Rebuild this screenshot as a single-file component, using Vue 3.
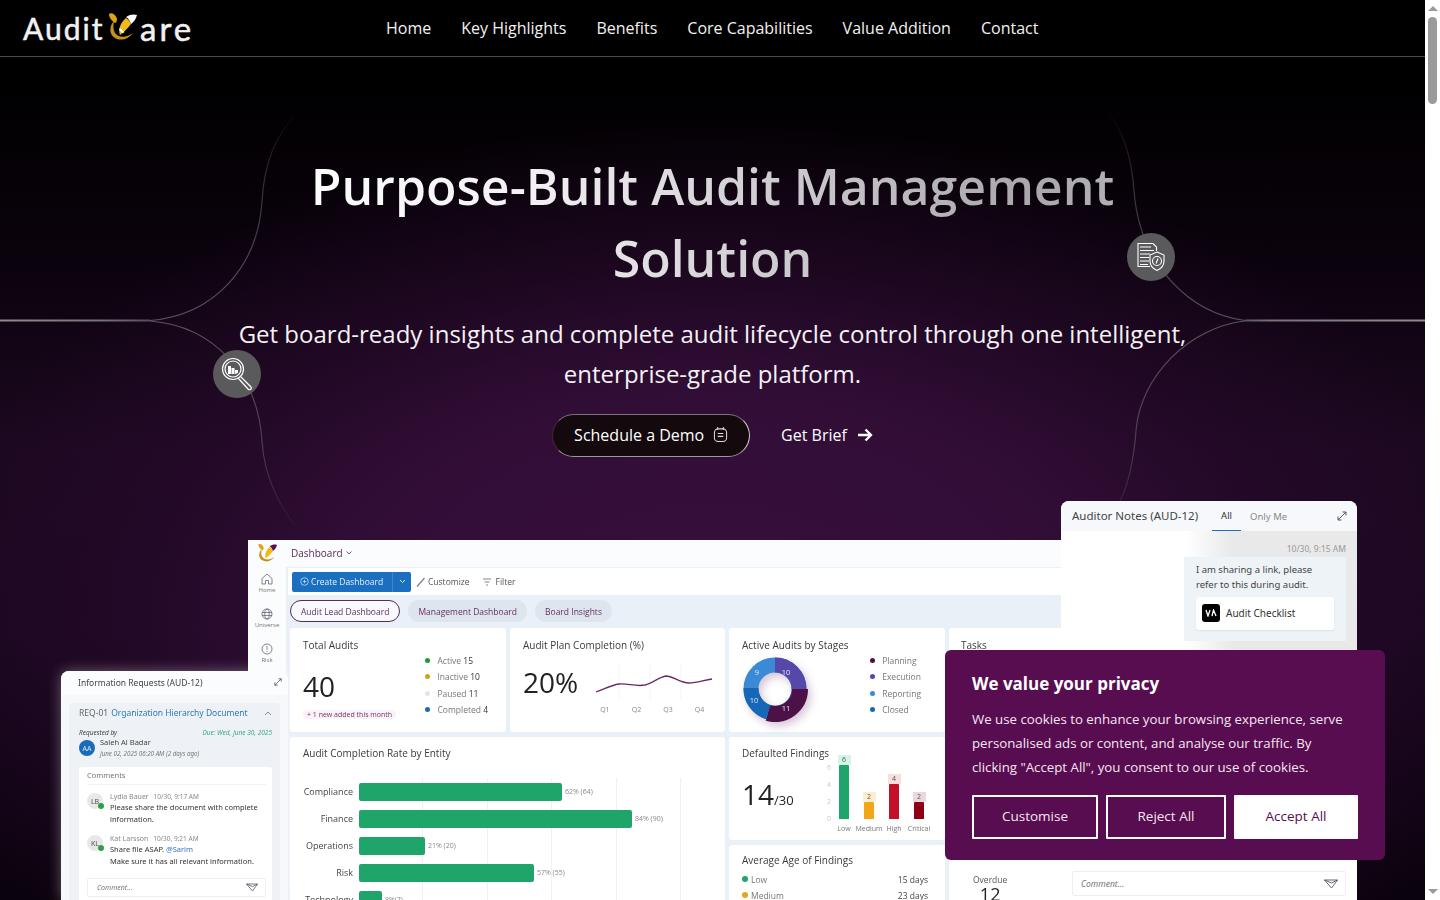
<template>
  <div class="page">
    <main class="site">
      <header class="topbar">
        <a class="logo">
          <span class="logo__audit">Audit</span>
          <svg class="logo__mark" width="30" height="28" viewBox="0 0 30 28">
            <path d="M7 8 C2 13 2 22 8 25 C13 28 21 27 26 20 C21 24 14 25 10 22 C6 19 6 13 7 8Z" fill="#c4921a" />
            <path d="M2 1 C5 -1 9 2 10 6 C10 8 9 10 8 10 C5 8 2 5 2 1Z" fill="#e0a314" />
            <path d="M19 5 C22 7 23 9 24 11 C21 15 17 19 13 22 C11 17 13 10 19 5Z" fill="#f2ba18" />
            <path d="M12.500 15 C14 16 16 17.500 17.500 19 L15.500 20.500 C14.500 19 13.500 18 12.300 17.500Z" fill="#fff" />
            <path d="M19 4 C23 1 27 1 30 2 C29 6 27 9 24 11 C23 8 21 5 19 4Z" fill="#fff" />
          </svg>
          <span class="logo__are">are</span>
        </a>
        <nav class="topnav">
          <a v-for="item in navItems" :key="item">{{ item }}</a>
        </nav>
      </header>

      <section class="hero">
        <svg class="hero__lines" width="1425" height="500" viewBox="0 56 1425 500" fill="none">
          <defs>
            <linearGradient id="lineLeft" x1="0" x2="170" y1="0" y2="0" gradientUnits="userSpaceOnUse">
              <stop offset="0" stop-color="#8f8a92" />
              <stop offset="0.6" stop-color="#77707a" />
              <stop offset="1" stop-color="#4a3f4c" />
            </linearGradient>
            <linearGradient id="lineRight" x1="1425" x2="1230" y1="0" y2="0" gradientUnits="userSpaceOnUse">
              <stop offset="0" stop-color="#8f8a92" />
              <stop offset="0.8" stop-color="#77707a" />
              <stop offset="1" stop-color="#4a3f4c" />
            </linearGradient>
            <linearGradient id="curveUp" x1="0" x2="0" y1="110" y2="320" gradientUnits="userSpaceOnUse">
              <stop offset="0" stop-color="#3a3340" stop-opacity="0" />
              <stop offset="0.4" stop-color="#3a3340" />
              <stop offset="1" stop-color="#5c525f" />
            </linearGradient>
            <linearGradient id="curveDown" x1="0" x2="0" y1="320" y2="535" gradientUnits="userSpaceOnUse">
              <stop offset="0" stop-color="#5c525f" />
              <stop offset="0.6" stop-color="#4a3c4e" />
              <stop offset="1" stop-color="#4a3c4e" stop-opacity="0" />
            </linearGradient>
          </defs>
          <path d="M0 319.500 H150" stroke="url(#lineLeft)" stroke-width="2" />
          <path d="M150 319.500 C215 314 258 265 262 200 C264 165 275 135 295 115" stroke="url(#curveUp)" stroke-width="1.200" />
          <path d="M150 320 C215 325 258 375 262 440 C264 475 280 510 305 535" stroke="url(#curveDown)" stroke-width="1.200" />
          <path d="M1425 319.500 H1245" stroke="url(#lineRight)" stroke-width="2" />
          <path d="M1245 319.500 C1190 312 1140 265 1134 190 C1132 160 1125 130 1105 108" stroke="url(#curveUp)" stroke-width="1.200" />
          <path d="M1245 320 C1190 326 1140 375 1136 430 C1134 455 1130 480 1120 500" stroke="url(#curveDown)" stroke-width="1.200" />
        </svg>

        <div class="float-icon float-icon--left">
          <svg width="34" height="34" viewBox="0 0 34 34" fill="none" stroke="#fff" stroke-width="1.200">
            <circle cx="13" cy="12" r="10.500" />
            <circle cx="13" cy="12" r="8" />
            <path d="M8 17 V9 H11 V17 M11.500 17 V11 H14.500 V17 M15 17 V13 H18 V16" fill="#fff" stroke="none" />
            <path d="M20.500 19.500 L31 30 Q32 31.500 30.500 32.500 Q29 33 28 32 L18.500 21.500" />
          </svg>
        </div>
        <div class="float-icon float-icon--right">
          <svg width="30" height="30" viewBox="0 0 30 30" fill="none" stroke="#fff" stroke-width="1.100">
            <path d="M14 24.500 H2 V1.500 H17 L20.500 5 V9" />
            <path d="M4 5 H15 M4 8.500 H18 M4 12 H14 M4 15.500 H13 M4 19 H13 M4 22.500 H12" />
            <path d="M21 10 L28 13 V19 C28 24 24.500 27 21 28.500 C17.500 27 14 24 14 19 V13Z" />
            <circle cx="21" cy="19" r="4.500" />
            <path d="M20 21.500 L22 16.500" />
          </svg>
        </div>

        <div class="hero__copy">
          <h1 class="hero__title">Purpose-Built Audit Management Solution</h1>
          <p class="hero__sub">Get board-ready insights and complete audit lifecycle control through one intelligent, enterprise-grade platform.</p>
          <div class="hero__actions">
            <a class="demo-btn">
              Schedule a Demo
              <svg width="15" height="17" viewBox="0 0 16 18" fill="none" stroke="#ddd8dc" stroke-width="1.100">
                <rect x="1.500" y="3" width="13" height="13.500" rx="4" />
                <path d="M5 1 V4 M11 1 V4 M5 8 H11 M5 11 H11" />
              </svg>
            </a>
            <a class="brief-btn">
              Get Brief
              <svg width="16" height="14" viewBox="0 0 16 14" fill="none" stroke="#fff" stroke-width="2.300">
                <path d="M1 7 H14 M8.500 1.500 L14 7 L8.500 12.500" />
              </svg>
            </a>
          </div>
        </div>

        <div class="dash">
          <aside class="dash__side">
            <svg width="20" height="20" viewBox="0 0 30 28">
              <path d="M7 8 C2 13 2 22 8 25 C13 28 21 27 26 20 C21 24 14 25 10 22 C6 19 6 13 7 8Z" fill="#c4921a" />
              <path d="M2 1 C5 -1 9 2 10 6 C10 8 9 10 8 10 C5 8 2 5 2 1Z" fill="#e0a314" />
              <path d="M19 5 C22 7 23 9 24 11 C21 15 17 19 13 22 C11 17 13 10 19 5Z" fill="#f2ba18" />
              <path d="M19 4 C23 1 27 1 30 2 C29 6 27 9 24 11 C23 8 21 5 19 4Z" fill="#5a1150" />
            </svg>
            <div class="side-item">
              <svg width="12" height="12" viewBox="0 0 12 12" fill="none" stroke="#667" stroke-width=".8"><path d="M1 5.500 L6 1 L11 5.500 V11 H7.500 V7.500 H4.500 V11 H1Z" /></svg>
              Home
            </div>
            <div class="side-item">
              <svg width="12" height="12" viewBox="0 0 12 12" fill="none" stroke="#667" stroke-width=".8"><circle cx="6" cy="6" r="5" /><ellipse cx="6" cy="6" rx="2.200" ry="5" /><path d="M1 4.500 H11 M1 7.500 H11" /></svg>
              Universe
            </div>
            <div class="side-item">
              <svg width="12" height="12" viewBox="0 0 12 12" fill="none" stroke="#667" stroke-width=".8"><circle cx="6" cy="6" r="5" /><path d="M6 3 V6.800 M6 8.200 V9" /></svg>
              Risk
            </div>
          </aside>
          <div class="dash__main">
            <div class="dash__crumb">
              Dashboard
              <svg width="6" height="4" viewBox="0 0 6 4" fill="none" stroke="#5a2a58" stroke-width=".8"><path d="M.5 .5 L3 3 L5.500 .5" /></svg>
            </div>
            <div class="dash__tools">
              <div class="create-btn">
                <span class="create-btn__label">
                  <svg width="9" height="9" viewBox="0 0 9 9" fill="none" stroke="#dbe8f7" stroke-width=".7"><circle cx="4.500" cy="4.500" r="3.800" /><path d="M4.500 2.800 V6.200 M2.800 4.500 H6.200" /></svg>
                  Create Dashboard
                </span>
                <span class="create-btn__more">
                  <svg width="7" height="5" viewBox="0 0 7 5" fill="none" stroke="#dbe8f7"><path d="M1 1 L3.500 3.500 L6 1" /></svg>
                </span>
              </div>
              <span class="tool">
                <svg width="10" height="10" viewBox="0 0 10 10" fill="none" stroke="#7a8496" stroke-width="1.300"><path d="M1 9.500 L8.500 1" /></svg>
                Customize
              </span>
              <span class="tool tool--filter">
                <svg width="10" height="8" viewBox="0 0 10 8" fill="none" stroke="#667" stroke-width=".8"><path d="M1 1 H9 M2.500 4 H7.500 M4 7 H6" /></svg>
                Filter
              </span>
            </div>
            <div class="dash__tabs">
              <span class="tab tab--active">Audit Lead Dashboard</span>
              <span class="tab">Management Dashboard</span>
              <span class="tab">Board Insights</span>
            </div>

            <div class="dash__grid">
              <div class="card card--total">
                <h4>Total Audits</h4>
                <div class="total-row">
                  <div>
                    <div class="big-num">40</div>
                    <span class="new-tag">+ 1 new added this month</span>
                  </div>
                  <ul class="legend">
                    <li v-for="row in auditStatus" :key="row.label">
                      <i :style="{ background: row.color }"></i>{{ row.label }} <b>{{ row.value }}</b>
                    </li>
                  </ul>
                </div>
              </div>
              <div class="card card--plan">
                <h4>Audit Plan Completion (%)</h4>
                <div class="plan-row">
                  <div class="big-num">20%</div>
                  <div class="spark">
                    <svg width="120" height="37" viewBox="0 0 120 37" fill="none">
                      <path d="M25 0 V37 M56 0 V37 M87 0 V37" stroke="#f0f1f4" stroke-width=".7" />
                      <path d="M2 29 C10 26 18 22 25 21 C33 20 42 24 51 22 C59 20 65 14 72 13 C79 13 86 20 95 20 C103 20 110 17 118 16" stroke="#6a2a68" stroke-width="1.300" />
                    </svg>
                    <div class="spark__labels"><span>Q1</span><span>Q2</span><span>Q3</span><span>Q4</span></div>
                  </div>
                </div>
              </div>
              <div class="card card--stages">
                <h4>Active Audits by Stages</h4>
                <div class="stages-row">
                  <svg class="donut" width="66" height="66" viewBox="0 0 66 66">
                    <circle cx="33" cy="33" r="24" fill="none" stroke="#3a8ad6" stroke-width="15" />
                    <path d="M33 9 A24 24 0 0 1 57 33" fill="none" stroke="#5548a8" stroke-width="15" />
                    <path d="M26 57 A25 25 0 0 1 9 33" fill="none" stroke="#1568b8" stroke-width="15" transform="translate(0 -1)" />
                    <path d="M58 33 A25 25 0 0 1 26 57" fill="none" stroke="#4c1248" stroke-width="16" />
                    <text x="44" y="19" class="donut__num">10</text>
                    <text x="44" y="55" class="donut__num">11</text>
                    <text x="12" y="47" class="donut__num">10</text>
                    <text x="15" y="19" class="donut__num">9</text>
                  </svg>
                  <ul class="legend legend--light">
                    <li v-for="row in stages" :key="row.label">
                      <i :style="{ background: row.color }"></i>{{ row.label }}
                    </li>
                  </ul>
                </div>
              </div>
              <div class="card card--tasks">
                <h4>Tasks</h4>
                <div class="tasks-foot">
                  <small>Overdue</small>
                  <strong>12</strong>
                </div>
              </div>
              <div class="card card--rate">
                <h4>Audit Completion Rate by Entity</h4>
                <div class="rate-chart">
                  <div class="rate-row" v-for="row in entityRates" :key="row.name">
                    <span class="rate-row__name">{{ row.name }}</span>
                    <span class="rate-row__bar" :style="{ width: row.width + 'px' }"></span>
                    <span class="rate-row__val">{{ row.text }}</span>
                  </div>
                </div>
              </div>
              <div class="card card--default">
                <h4>Defaulted Findings</h4>
                <div class="default-row">
                  <div class="big-num big-num--ratio">14<small>/30</small></div>
                  <div class="bars">
                    <div class="bar-axis"><span>6</span><span>4</span><span>2</span><span>0</span></div>
                    <div class="bar-col" v-for="bar in findingBars" :key="bar.label">
                      <span class="bar-col__tag" :style="{ background: bar.tag }">{{ bar.value }}</span>
                      <span class="bar-col__bar" :style="{ height: bar.height + 'px', background: bar.color }"></span>
                      <span class="bar-col__label">{{ bar.label }}</span>
                    </div>
                  </div>
                </div>
              </div>
              <div class="card card--age">
                <h4>Average Age of Findings</h4>
                <div class="age-row"><i class="dot-green"></i>Low<span>15 days</span></div>
                <div class="age-row"><i class="dot-amber"></i>Medium<span>23 days</span></div>
              </div>
            </div>
          </div>
        </div>

        <div class="panel panel--requests">
          <div class="panel__head">
            <span>Information Requests (AUD-12)</span>
            <svg width="8" height="8" viewBox="0 0 10 10" fill="none" stroke="#556" stroke-width="1"><path d="M1 9 L9 1 M5.500 1 H9 V4.500 M1 5.500 V9 H4.500" /></svg>
          </div>
          <div class="req">
            <div class="req__title">
              <span class="req__id">REQ-01</span>
              <span class="req__name">Organization Hierarchy Document</span>
              <svg class="req__chev" width="8" height="5" viewBox="0 0 8 5" fill="none" stroke="#6a93b8"><path d="M1 4 L4 1 L7 4" /></svg>
            </div>
            <div class="req__meta">
              <em>Requested by</em>
              <em class="req__due">Due: Wed, June 30, 2025</em>
            </div>
            <div class="req__user">
              <span class="avatar avatar--blue">AA</span>
              <div>
                <div class="req__person">Saleh Al Badar</div>
                <em class="req__date">June 02, 2025 06:20 AM (2 days ago)</em>
              </div>
            </div>
            <div class="comments">
              <div class="comments__title">Comments</div>
              <div class="comment" v-for="c in comments" :key="c.initials">
                <span class="avatar">{{ c.initials }}<i></i></span>
                <div>
                  <div class="comment__who">{{ c.name }} <span>{{ c.time }}</span></div>
                  <p v-html="c.body"></p>
                </div>
              </div>
              <div class="comment-box">
                <em>Comment...</em>
                <svg width="12" height="9" viewBox="0 0 12 9" fill="none" stroke="#556" stroke-width=".8"><path d="M.5 1 H11.500 L6.500 8Z M.5 1 L6.500 3.500 L11.500 1" /></svg>
              </div>
            </div>
          </div>
        </div>

        <div class="panel panel--notes">
          <div class="notes__head">
            <span class="notes__title">Auditor Notes (AUD-12)</span>
            <span class="notes__tab notes__tab--on">All</span>
            <span class="notes__tab">Only Me</span>
            <svg class="notes__expand" width="10" height="10" viewBox="0 0 10 10" fill="none" stroke="#556" stroke-width="1"><path d="M1 9 L9 1 M5.500 1 H9 V4.500 M1 5.500 V9 H4.500" /></svg>
          </div>
          <div class="notes__body">
            <div class="notes__time">10/30, 9:15 AM</div>
            <div class="note">
              <p>I am sharing a link, please refer to this during audit.</p>
              <div class="note__link">
                <span class="note__badge">
                  <svg width="12" height="8" viewBox="0 0 12 8" fill="none" stroke="#fff" stroke-width="1.300"><path d="M1 1 L3 7 L5 1 M7 7 L8.500 1 L11 7" /></svg>
                </span>
                Audit Checklist
              </div>
            </div>
            <div class="notes__comment">
              <em>Comment...</em>
              <svg width="14" height="10" viewBox="0 0 14 10" fill="none" stroke="#556" stroke-width=".9"><path d="M.5 1 H13.500 L7.500 9Z M.5 1 L7.500 4 L13.500 1" /></svg>
            </div>
          </div>
        </div>
      </section>

      <div class="cookie">
        <h3>We value your privacy</h3>
        <p>We use cookies to enhance your browsing experience, serve personalised ads or content, and analyse our traffic. By clicking "Accept All", you consent to our use of cookies.</p>
        <div class="cookie__btns">
          <button class="cookie__btn cookie__btn--wide">Customise</button>
          <button class="cookie__btn">Reject All</button>
          <button class="cookie__btn cookie__btn--solid">Accept All</button>
        </div>
      </div>
    </main>

    <div class="scrollbar">
      <span class="scrollbar__up"></span>
      <span class="scrollbar__thumb"></span>
      <span class="scrollbar__down"></span>
    </div>
  </div>
</template>

<script setup>
const navItems = ['Home', 'Key Highlights', 'Benefits', 'Core Capabilities', 'Value Addition', 'Contact']

const auditStatus = [
  { label: 'Active', value: 15, color: '#1e9a2e' },
  { label: 'Inactive', value: 10, color: '#c9a227' },
  { label: 'Paused', value: 11, color: '#e4e4e6' },
  { label: 'Completed', value: 4, color: '#1f68b5' }
]

const stages = [
  { label: 'Planning', color: '#4c1248' },
  { label: 'Execution', color: '#5548a8' },
  { label: 'Reporting', color: '#3a8ad6' },
  { label: 'Closed', color: '#1568b8' }
]

const entityRates = [
  { name: 'Compliance', width: 203, text: '62% (64)' },
  { name: 'Finance', width: 273, text: '84% (90)' },
  { name: 'Operations', width: 66, text: '21% (20)' },
  { name: 'Risk', width: 175, text: '57% (55)' },
  { name: 'Technology', width: 23, text: '8%(7)' }
]

const findingBars = [
  { label: 'Low', value: 6, height: 54, color: '#1fa56a', tag: '#d4f5e6' },
  { label: 'Medium', value: 2, height: 17, color: '#f2a71b', tag: '#fdeecf' },
  { label: 'High', value: 4, height: 35, color: '#c40f2a', tag: '#f8dde1' },
  { label: 'Critical', value: 2, height: 17, color: '#8f0012', tag: '#ecd8dc' }
]

const comments = [
  { initials: 'LB', name: 'Lydia Bauer', time: '10/30, 9:17 AM', body: 'Please share the document with complete information.' },
  { initials: 'KL', name: 'Kat Larsson', time: '10/30, 9:21 AM', body: 'Share file ASAP. <span class="mention">@Sarim</span><br>Make sure it has all relevant information.' }
]
</script>

<style>
html,
body {
  margin: 0;
  background: #000;
  overflow: hidden;
}

.mention {
  color: #2f78bd;
}
</style>

<style scoped>
* {
  box-sizing: border-box;
}

.page {
  display: flex;
  width: 1440px;
  height: 900px;
  overflow: hidden;
  font-family: "Open Sans", "Noto Sans", sans-serif;
}

.site {
  position: relative;
  flex: 1;
  min-width: 0;
  height: 900px;
  overflow: hidden;
  background:
    radial-gradient(ellipse 800px 520px at 50% 640px, #380f3d 0%, #320e37 45%, rgba(40, 10, 44, 0.6) 72%, rgba(0, 0, 0, 0) 100%),
    linear-gradient(180deg, #000 8%, #0a020c 28%, #1c0820 50%, #1a0720 70%, #0a020c 100%);
}

.topbar {
  display: flex;
  align-items: center;
  height: 57px;
  padding-left: 23px;
  border-bottom: 1px solid #4a4a4a;
  background: #000;
}

.logo {
  display: flex;
  align-items: center;
  width: 363px;
  color: #f2f2f2;
  font-family: "Lato", sans-serif;
  font-size: 30px;
  font-weight: 400;
  line-height: 1;
  -webkit-text-stroke: 0.5px #f2f2f2;
}

.logo__audit {
  width: 84px;
  letter-spacing: 2px;
}

.logo__are {
  font-size: 33px;
  letter-spacing: 3px;
}

.logo__mark {
  flex: none;
  margin: -3px 3px 0 0;
}

.topnav {
  display: flex;
  gap: 30px;
  font-size: 16px;
  color: #f2f2f2;
}

.hero {
  position: relative;
  height: 843px;
  overflow: hidden;
}

.hero__lines {
  position: absolute;
  top: 0;
  left: 0;
}

.float-icon {
  position: absolute;
  display: flex;
  align-items: center;
  justify-content: center;
  width: 48px;
  height: 48px;
  border-radius: 50%;
  background: #5a595c;
}

.float-icon--left {
  top: 293px;
  left: 213px;
}

.float-icon--right {
  top: 176px;
  left: 1127px;
}

.hero__copy {
  position: relative;
  display: flex;
  flex-direction: column;
  align-items: center;
  padding-top: 93px;
}

.hero__title {
  width: 900px;
  margin: 0;
  font-size: 50px;
  font-weight: 600;
  line-height: 72px;
  text-align: center;
  background: linear-gradient(90deg, #fff 0%, #f2f0f3 30%, #a9a6ac 85%, #b8b5ba 100%);
  -webkit-background-clip: text;
  background-clip: text;
  color: transparent;
}

.hero__sub {
  width: 960px;
  margin: 20px 0 0;
  color: #f4f1f5;
  font-size: 24px;
  line-height: 40px;
  text-align: center;
}

.hero__actions {
  display: flex;
  align-items: center;
  gap: 31px;
  margin-top: 20px;
  font-size: 16px;
  color: #fff;
}

.demo-btn {
  display: flex;
  align-items: center;
  gap: 9px;
  width: 198px;
  height: 43px;
  padding: 0 0 2px 21px;
  border: 1px solid #3a2a3a;
  border-top-color: #7c707a;
  border-right-color: #cfc8cf;
  border-bottom-color: #a094a0;
  border-radius: 22px;
  background: #140a0e;
}

.brief-btn {
  display: flex;
  align-items: center;
  gap: 10px;
  padding-bottom: 2px;
}

.dash {
  position: absolute;
  top: 483px;
  left: 248px;
  display: flex;
  width: 880px;
  height: 400px;
  border-radius: 8px 8px 0 0;
  background: #fff;
  color: #333;
  filter: blur(0.25px);
}

.dash__side {
  display: flex;
  flex-direction: column;
  align-items: center;
  width: 38px;
  padding-top: 3px;
  background: #fbfcfd;
  font-size: 6px;
  color: #777;
}

.side-item {
  display: flex;
  flex-direction: column;
  align-items: center;
  gap: 1px;
  margin-top: 14px;
}

.side-item:first-of-type {
  margin-top: 10px;
}

.dash__main {
  flex: 1;
  min-width: 0;
  background: #e9f0f7;
}

.dash__crumb {
  display: flex;
  align-items: center;
  gap: 3px;
  height: 27px;
  padding: 0 5px 2px;
  background: #fafcfd;
  font-size: 10px;
  color: #5a2a58;
}

.dash__tools {
  display: flex;
  align-items: center;
  gap: 5px;
  height: 27px;
  margin: 1px 0 0 2px;
  padding-left: 4px;
  background: #fff;
  font-size: 8.500px;
  color: #555;
}

.create-btn {
  display: flex;
  height: 20px;
  border-radius: 2px;
  background: #1a6fc0;
  color: #e8f1fb;
}

.create-btn__label {
  display: flex;
  align-items: center;
  gap: 2px;
  width: 100px;
  padding-left: 8px;
}

.create-btn__more {
  display: flex;
  align-items: center;
  justify-content: center;
  width: 19px;
  border-left: 1px solid #3f86cb;
}

.tool {
  display: flex;
  align-items: center;
  gap: 2px;
}

.tool--filter {
  gap: 4px;
  margin-left: 7px;
}

.dash__tabs {
  display: flex;
  gap: 8px;
  height: 33px;
  padding: 5px 4px 0;
}

.tab {
  display: flex;
  align-items: center;
  height: 22px;
  padding: 0 10px;
  border-radius: 11px;
  background: #dfe5ee;
  font-size: 8.500px;
  color: #64305f;
}

.tab--active {
  border: 1px solid #5a2a58;
  background: #f7f9fc;
}

.dash__grid {
  display: grid;
  grid-template-columns: 216px 215px 216px 200px;
  gap: 5px 4px;
  align-items: start;
  padding-left: 4px;
}

.card {
  padding: 10px 13px;
  border-radius: 3px;
  background: #fff;
}

.card h4 {
  margin: 0;
  font-size: 10px;
  font-weight: 400;
  color: #3a3a3a;
}

.card--total,
.card--plan,
.card--stages {
  grid-row: 1;
  height: 104px;
}

.total-row {
  display: flex;
  justify-content: space-between;
  padding-right: 5px;
}

.big-num {
  font-size: 28px;
  line-height: 1;
  color: #222;
}

.total-row .big-num {
  margin-top: 20px;
}

.new-tag {
  display: inline-block;
  margin-top: 3px;
  padding: 0 4px;
  border-radius: 6px;
  background: #fbf1f8;
  font-size: 7px;
  color: #6a3a66;
}

.legend {
  margin: 0;
  padding: 0;
  list-style: none;
  font-size: 8.500px;
  color: #777;
}

.legend li {
  display: flex;
  align-items: center;
  height: 16.500px;
  white-space: pre;
}

.legend i {
  width: 5px;
  height: 5px;
  margin-right: 7px;
  border-radius: 50%;
}

.legend b {
  font-weight: 500;
  color: #333;
}

.plan-row {
  display: flex;
  align-items: flex-start;
  margin-top: 11px;
}

.plan-row .big-num {
  margin-top: 5px;
}

.spark {
  margin-left: 16px;
}

.spark__labels {
  display: flex;
  justify-content: space-between;
  width: 116px;
  padding: 0 6px;
  font-size: 7px;
  color: #888;
}

.stages-row {
  display: flex;
  justify-content: space-between;
  padding-right: 11px;
}

.donut {
  margin: 4px 0 0;
  filter: drop-shadow(3px 4px 4px rgba(90, 20, 90, 0.25));
}

.donut__num {
  fill: #dfe6f5;
  font-size: 7.500px;
  text-anchor: middle;
}

.card--tasks {
  grid-column: 4;
  grid-row: 1 / span 3;
  height: 275px;
  display: flex;
  flex-direction: column;
  justify-content: space-between;
  padding: 10px 12px 0;
}

.tasks-foot {
  display: flex;
  flex-direction: column;
  align-items: center;
  width: fit-content;
  margin-left: 12px;
  line-height: 1;
}

.tasks-foot small {
  margin-bottom: 1px;
  font-size: 8.500px;
  color: #555;
}

.tasks-foot strong {
  font-size: 18px;
  font-weight: 400;
  color: #222;
}

.card--rate {
  grid-column: 1 / span 2;
  grid-row: 2 / span 2;
  height: 170px;
  padding-top: 9px;
}

.rate-chart {
  margin-top: 18px;
  background: linear-gradient(90deg, transparent 0 63px, #eef0f3 63px 64px, transparent 64px 128px, #eef0f3 128px 129px, transparent 129px 192px, #eef0f3 192px 193px, transparent 193px 257px, #eef0f3 257px 258px, transparent 258px 321px, #eef0f3 321px 322px, transparent 322px);
  background-position: 56px 0;
  background-repeat: no-repeat;
}

.rate-row {
  display: flex;
  align-items: center;
  height: 27px;
  font-size: 9px;
}

.rate-row__name {
  width: 50px;
  margin-right: 6px;
  color: #444;
  text-align: right;
}

.rate-row__bar {
  height: 18px;
  border-radius: 2px;
  background: #1fa56a;
}

.rate-row__val {
  margin-left: 3px;
  font-size: 7px;
  color: #888;
}

.card--default {
  grid-column: 3;
  grid-row: 2;
  height: 103px;
  padding-top: 9px;
}

.default-row {
  display: flex;
  align-items: flex-start;
  justify-content: space-between;
}

.big-num--ratio {
  margin-top: 20px;
}

.big-num--ratio small {
  font-size: 13px;
}

.bars {
  display: flex;
  align-items: flex-end;
  gap: 1px;
  height: 80px;
  margin: -6px 1px 0 0;
}

.bar-axis {
  display: flex;
  flex-direction: column;
  width: 8px;
  margin-bottom: 7px;
  font-size: 7px;
  line-height: 17px;
  text-align: right;
  color: #c9c9cc;
}

.bar-col {
  display: flex;
  flex-direction: column;
  align-items: center;
  width: 24px;
}

.bar-col__tag {
  width: 13px;
  height: 10px;
  font-size: 7px;
  line-height: 10px;
  text-align: center;
  color: #555;
}

.bar-col__bar {
  width: 10px;
  border-radius: 1px 1px 0 0;
}

.bar-col__label {
  margin-top: 5px;
  font-size: 7px;
  line-height: 10px;
  color: #777;
}

.card--age {
  grid-column: 3;
  grid-row: 3;
  height: 80px;
  padding: 8px 17px 0 13px;
}

.age-row {
  display: flex;
  align-items: center;
  height: 16px;
  font-size: 8.500px;
  color: #777;
}

.card--age h4 {
  margin-bottom: 4px;
}

.age-row span {
  margin-left: auto;
  color: #444;
}

.age-row i {
  width: 6px;
  height: 6px;
  margin-right: 3px;
  border-radius: 50%;
}

.dot-green {
  background: #1fa56a;
}

.dot-amber {
  background: #e7a41f;
}

.panel {
  position: absolute;
  overflow: hidden;
  border-radius: 8px 8px 0 0;
  background: #fff;
  font-family: "Noto Sans", sans-serif;
  color: #444;
}

.panel--requests {
  top: 614px;
  left: 61px;
  width: 227px;
  height: 229px;
  background: #f6f8fb;
  box-shadow: 0 0 14px rgba(255, 255, 255, 0.35);
  filter: blur(0.25px);
}

.panel__head {
  display: flex;
  align-items: center;
  justify-content: space-between;
  height: 24px;
  padding: 0 6px 2px 17px;
  font-size: 8.500px;
  background: #fbfcfe;
}

.req {
  margin: 8px 8px 0;
  height: 300px;
  padding: 4px 8px 4px 10px;
  border-radius: 4px;
  background: #eef2f7;
}

.req__title {
  display: flex;
  align-items: center;
  gap: 3px;
  font-size: 8.500px;
  line-height: 12px;
  color: #666;
}

.req__name {
  color: #2d78bd;
}

.req__chev {
  margin-left: auto;
}

.req__meta {
  display: flex;
  justify-content: space-between;
  margin-top: 9px;
  font-size: 6.500px;
  color: #444;
}

.req__due {
  color: #3ba88c;
}

.req__user {
  display: flex;
  gap: 5px;
  align-items: center;
}

.req__person {
  font-size: 7.500px;
  line-height: 11px;
}

.req__date {
  display: block;
  font-size: 6.200px;
  line-height: 11px;
  color: #777;
}

.avatar {
  position: relative;
  flex: none;
  display: flex;
  align-items: center;
  justify-content: center;
  width: 16px;
  height: 16px;
  border-radius: 50%;
  background: #e6e8ea;
  font-size: 7px;
  color: #555;
}

.avatar--blue {
  background: #1a6cb8;
  color: #dbe8f6;
}

.avatar i {
  position: absolute;
  right: -1px;
  bottom: 0;
  width: 6px;
  height: 6px;
  border-radius: 50%;
  background: #2ea043;
}

.comments {
  margin: 8px 0 0;
  padding: 0 6px 30px 8px;
  background: #fff;
  border-radius: 3px;
}

.comments__title {
  margin-bottom: -2px;
  padding: 3px 0;
  font-size: 7.500px;
  line-height: 11px;
  color: #777;
  border-bottom: 1px solid #f1f2f4;
}

.comment {
  display: flex;
  gap: 7px;
  margin-top: 8px;
}

.comment .avatar {
  margin-top: 2px;
}

.comment__who {
  font-size: 7px;
  line-height: 11px;
  color: #888;
}

.comment__who span {
  margin-left: 3px;
  font-size: 6.500px;
}

.comment p {
  margin: 0;
  font-size: 7.500px;
  line-height: 11.500px;
  color: #333;
}

.comment-box {
  display: flex;
  align-items: center;
  justify-content: space-between;
  height: 19px;
  margin-top: 11px;
  padding: 0 7px 0 9px;
  border: 1px solid #eceef1;
  border-radius: 2px;
  font-size: 7px;
  color: #777;
}

.panel--notes {
  top: 444px;
  left: 1061px;
  width: 296px;
  height: 399px;
  background: #fff;
}

.notes__head {
  display: flex;
  align-items: center;
  height: 30px;
  padding-left: 11px;
  background: #f6f8fb;
}

.notes__title {
  margin: 0 14px 2px 0;
  font-size: 11.500px;
  color: #444;
}

.notes__tab {
  display: flex;
  align-items: center;
  height: 30px;
  padding: 0 9px;
  font-size: 9.500px;
  color: #888;
}

.notes__tab--on {
  color: #333;
  border-bottom: 1px solid #1a6fc0;
}

.notes__expand {
  margin-left: auto;
  margin-right: 10px;
}

.notes__body {
  position: relative;
  height: 369px;
  background: linear-gradient(90deg, #fff 0 42%, #e9e9ea 58%, #e9e9ea 100%);
  background-size: 100% 120px;
  background-repeat: no-repeat;
}

.notes__time {
  padding: 12px 11px 3px 0;
  font-size: 8.500px;
  color: #999;
  text-align: right;
}

.note {
  width: 162px;
  margin: 0 11px 0 auto;
  padding: 5px 12px 11px;
  background: #eef3f7;
}

.note p {
  margin: 0 0 5px;
  font-size: 9.500px;
  line-height: 15px;
  color: #444;
}

.note__link {
  display: flex;
  align-items: center;
  gap: 6px;
  height: 33px;
  padding: 0 0 1px 6px;
  border-radius: 3px;
  background: #fff;
  box-shadow: 0 1px 2px rgba(0, 0, 0, 0.08);
  font-size: 10px;
  color: #333;
}

.note__badge {
  display: flex;
  align-items: center;
  justify-content: center;
  width: 18px;
  height: 18px;
  border-radius: 3px;
  background: #000;
}

.notes__comment {
  position: absolute;
  top: 340px;
  left: 11px;
  right: 11px;
  display: flex;
  align-items: center;
  justify-content: space-between;
  height: 25px;
  padding: 0 7px 0 8px;
  border: 1px solid #eceef1;
  border-radius: 2px;
  background: #fff;
  font-size: 8.500px;
  color: #777;
}

.cookie {
  position: absolute;
  top: 650px;
  left: 945px;
  width: 440px;
  height: 210px;
  padding: 22px 27px;
  border-radius: 6px;
  background: #570d4f;
  color: #fff;
}

.cookie h3 {
  margin: 0;
  font-size: 17px;
  font-weight: 700;
  line-height: 24px;
}

.cookie p {
  margin: 11px 0 0;
  font-size: 13.250px;
  line-height: 24px;
  color: #f6e6f3;
}

.cookie__btns {
  display: flex;
  gap: 8px;
  margin-top: 16px;
}

.cookie__btn {
  width: 120px;
  height: 44px;
  padding: 0 0 2px;
  border: 2px solid #fff;
  border-radius: 1px;
  background: transparent;
  color: #f6e6f3;
  font-family: inherit;
  font-size: 13.500px;
}

.cookie__btn--wide {
  width: 126px;
}

.cookie__btn--solid {
  width: 124px;
  background: #fff;
  color: #570d4f;
}

.scrollbar {
  display: flex;
  flex: none;
  flex-direction: column;
  align-items: center;
  width: 15px;
  height: 900px;
  background: #fff;
}

.scrollbar__up,
.scrollbar__down {
  width: 0;
  height: 0;
  border-left: 5px solid transparent;
  border-right: 5px solid transparent;
}

.scrollbar__up {
  margin-top: 6px;
  border-bottom: 5px solid #9a9a9a;
}

.scrollbar__thumb {
  width: 9px;
  height: 87px;
  margin-top: 6px;
  border-radius: 5px;
  background: #9a9a9a;
}

.scrollbar__down {
  margin-top: auto;
  margin-bottom: 6px;
  border-top: 5px solid #9a9a9a;
}
</style>
